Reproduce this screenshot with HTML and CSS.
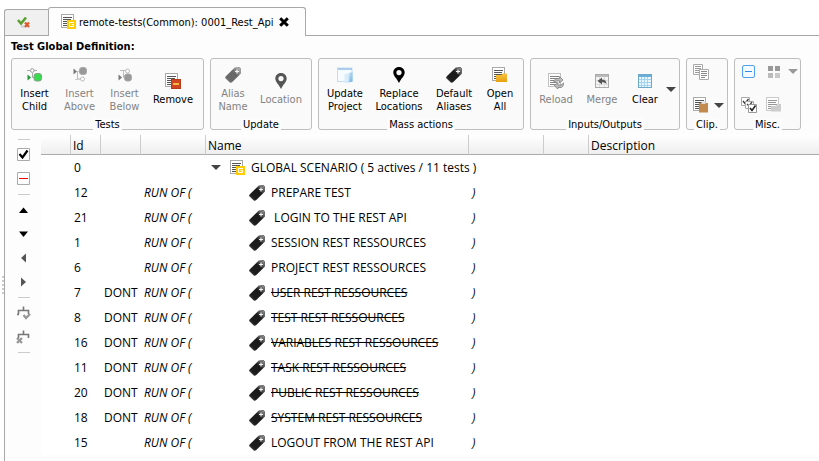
FILE: index.html
```html
<!DOCTYPE html>
<html lang="en">
<head>
<meta charset="utf-8">
<title>remote-tests(Common): 0001_Rest_Api</title>
<link rel="stylesheet" href="styles.css">
</head>
<body>
<svg class="sprite" aria-hidden="true">
  <defs>
    <linearGradient id="tagFill" x1="0" y1="1" x2="1" y2="0">
      <stop offset="0" stop-color="#666"/><stop offset=".25" stop-color="#1c1c1c"/><stop offset=".6" stop-color="#1a1a1a"/><stop offset="1" stop-color="#aaa"/>
    </linearGradient>
    <linearGradient id="folder" x1="0" y1="0" x2="0" y2="1">
      <stop offset="0" stop-color="#f8c544"/><stop offset="1" stop-color="#e8a00c"/>
    </linearGradient>
    <linearGradient id="blue" x1="0" y1="0" x2="1" y2="1">
      <stop offset="0" stop-color="#d5ecfa"/><stop offset="1" stop-color="#6aaee0"/>
    </linearGradient>
  </defs>
  <symbol id="page" viewBox="0 0 16 16">
    <rect x=".5" y=".5" width="12" height="13" fill="#fff" stroke="#aaa"/>
    <path d="M2 3.500h9M2 5.500h8M2 7.500h9M2 9.500h7M2 11.500h8" stroke="#555"/>
  </symbol>
  <symbol id="global" viewBox="0 0 16 16">
    <use href="#page" width="16" height="16"/>
    <rect x="6" y="6" width="9" height="9" fill="#fc0"/>
    <path d="M13 8.500H8.500v4H12.500v-2H10.500" fill="none" stroke="#fff"/>
  </symbol>
  <symbol id="tag" viewBox="0 0 16 16">
    <path d="M9.500 .7L14.500 0 16 1.500V6.500L7 15.300Q5.700 16.300 4.500 15.200L.6 11.500Q-.3 10.500.6 9.500z" fill="url(#tagFill)"/>
    <path d="M9.500 1.200L14.500 .5 15.500 1.500V6" fill="none" stroke="#666" stroke-width=".8"/>
    <path d="M12 2.500v4M10 4.500h4" stroke="#f4f4f4" stroke-width="1.200"/>
  </symbol>
  <symbol id="pin" viewBox="0 0 16 16">
    <path fill-rule="evenodd" d="M8 0C4.500 0 2.300 2.500 2.300 5.500 2.300 9 6 11.500 8 16 10 11.500 13.700 9 13.700 5.500 13.700 2.500 11.500 0 8 0zM8 3a2.600 2.600 0 1 1 0 5.200A2.600 2.600 0 0 1 8 3z" fill="currentColor"/>
  </symbol>
  <symbol id="child" viewBox="0 0 16 16">
    <path d="M1 3.500h3M8 3.500h3M6.500 6v4.500h2" fill="none" stroke="#aaa"/>
    <circle cx="6.300" cy="3.500" r="1.800" fill="#fff" stroke="#999"/>
    <path d="M1.500 7.500L5 10.500 1.500 13.500z" fill="#1d9b32"/>
    <rect x="8" y="6.500" width="7.500" height="7.500" rx="2.500" fill="#35dc4b" stroke="#8a9a8a"/>
  </symbol>
  <symbol id="above" viewBox="0 0 16 16">
    <path d="M1.500 1.500L5 4.500 1.500 7.500z" fill="#777"/>
    <path d="M7 4.500h-1.500v7.500h3" fill="none" stroke="#bbb"/>
    <rect x="7.500" y=".5" width="7" height="7" rx="2.500" fill="#999" stroke="#aaa"/>
    <circle cx="10.500" cy="12" r="2" fill="#fff" stroke="#bbb"/><path d="M3 12.500h5" stroke="#ccc"/>
  </symbol>
  <symbol id="below" viewBox="0 0 16 16">
    <path d="M3 3.500h6M6.500 4v6.500h2" fill="none" stroke="#bbb"/>
    <circle cx="10.500" cy="4" r="2" fill="#fff" stroke="#bbb"/>
    <path d="M1.500 7.500L5 10.500 1.500 13.500z" fill="#777"/>
    <rect x="7.500" y="7" width="7" height="7" rx="2.500" fill="#999" stroke="#aaa"/>
  </symbol>
  <symbol id="remove" viewBox="0 0 16 16">
    <use href="#page" width="16" height="16"/>
    <rect x="6.500" y="6.500" width="9" height="9" fill="#cf4520" stroke="#b93a1c"/>
    <path d="M8 11h6" stroke="#ffe14a" stroke-width="1.500"/>
  </symbol>
  <symbol id="project" viewBox="0 0 16 16">
    <rect x=".5" y="1" width="14.500" height="13.500" fill="#f6fbff" stroke="#c3dcf2"/>
    <path d="M1 2h14" stroke="#9cc4e6" stroke-width="1.600"/>
    <path d="M7.500 7.500l4-1.500v10h-4z" fill="#d8ecfb"/><path d="M11.500 6l4-1v9.500l-4 1z" fill="url(#blue)"/>
  </symbol>
  <symbol id="open" viewBox="0 0 16 16">
    <use href="#page" width="16" height="16"/>
    <path d="M4 8h5.500l1-1.500H15V15H4z" fill="url(#folder)"/>
  </symbol>
  <symbol id="reload" viewBox="0 0 16 16">
    <use href="#page" width="16" height="16" opacity=".7"/>
    <path d="M6 9.500V7.500l2-2h3.500V3.500L15 7l-3.500 3V8H8zM15.500 10v2l-2 2.500H10v2L6.500 12.500 10 9.500v2.500h3z" fill="#bbb" stroke="#777" stroke-width=".7"/>
  </symbol>
  <symbol id="merge" viewBox="0 0 16 16">
    <rect x="1.500" y="1.500" width="13" height="13" fill="#f4f4f4" stroke="#aaa"/>
    <path d="M2 3h12" stroke="#bbb" stroke-width="2"/><path d="M2 7.500h12M2 11.500h12M5.500 4v10M10.500 4v10" stroke="#ddd"/>
    <path d="M3.500 8L8 4.500V6.500Q12.500 6.500 12.500 11 11 9 8 9.300V11.500z" fill="#555"/>
  </symbol>
  <symbol id="clear" viewBox="0 0 16 16">
    <rect x="1.500" y="1.500" width="13" height="13" fill="#e8f7ff" stroke="#6ea9c9"/>
    <path d="M2 3h12" stroke="#6aaedb" stroke-width="2"/><path d="M2 6.500h12M2 9.500h12M2 12.500h12M4.500 4v10M7.500 4v10M10.500 4v10" stroke="#a5d3ee"/>
  </symbol>
  <symbol id="copy" viewBox="0 0 16 16">
    <path d="M.5 .5h9v10h-9z" fill="#fff" stroke="#aaa"/><path d="M2 2.500h6M2 4.500h6M2 6.500h6M2 8.500h6" stroke="#999"/>
    <path d="M6.500 5.500h9v10h-9z" fill="#fff" stroke="#aaa"/><path d="M8 7.500h6M8 9.500h6M8 11.500h6M8 13.500h4" stroke="#888"/>
  </symbol>
  <symbol id="paste" viewBox="0 0 16 16">
    <use href="#page" width="16" height="16"/>
    <path d="M6 6h9v9.500H6z" fill="#c28a4c"/><path d="M8.500 4.500h4v2.500h-4z" fill="#ddd"/>
  </symbol>
  <symbol id="collapse" viewBox="0 0 16 16">
    <rect x="1.500" y="1.500" width="12" height="12" rx="1.500" fill="#f5faff" stroke="#4da0ef"/><path d="M4 7.500h7" stroke="#2f8fe8"/>
  </symbol>
  <symbol id="tiles" viewBox="0 0 16 16">
    <path d="M2 2h5v5H2zM9 2h5v5H9z" fill="#999"/><path d="M2 9h5v5H2z" fill="#bbb"/><path d="M9 9h5v5H9z" fill="#c8c8c8"/>
  </symbol>
  <symbol id="checks" viewBox="0 0 16 16">
    <path d="M.5 .5h8v8h-8z" fill="#fff" stroke="#aaa"/><path d="M2 4l2 2.500L7.500 2" fill="none" stroke="#333" stroke-width="1.300"/>
    <path d="M4.500 4.500h8v7h-8z" fill="#fff" stroke="#aaa"/><path d="M6 7l2 2L11 5" fill="none" stroke="#444" stroke-width="1.300"/>
    <path d="M7.500 7.500h8v8h-8z" fill="#fff" stroke="#999"/><path d="M9 11l2 2.500L14.500 8.500" fill="none" stroke="#222" stroke-width="1.600"/>
  </symbol>
  <symbol id="pagefolder" viewBox="0 0 16 16">
    <use href="#page" width="16" height="16" opacity=".6"/>
    <path d="M5 9h5l2-2h3v7.500H5z" fill="#ccc"/>
  </symbol>
  <symbol id="tree" viewBox="0 0 16 16">
    <path d="M7.500 1.500v4M2.500 9V5.500H12.500V9M1 9.500h2" fill="none" stroke="#777" stroke-width="1.600"/>
  </symbol>
</svg>

<nav class="tabs">
  <a class="tab" href="#" aria-label="Results">
    <svg class="icon" viewBox="0 0 16 16"><path d="M5 11.500h5" stroke="#ccc" stroke-width="2"/><path d="M2 5L5 8.500 10 2.500" fill="none" stroke="#5aa02c" stroke-width="2.600"/><path d="M9 7.500l4 4.500M13 7.500l-4 4.500" stroke="#e0592a" stroke-width="2.200"/></svg>
  </a>
  <div class="tab active">
    <svg class="icon" viewBox="0 0 16 16"><use href="#global"/></svg>
    <span>remote-tests(Common): 0001_Rest_Api</span>
    <button class="close" aria-label="Close"><svg viewBox="0 0 10 10"><path d="M1.200 1.200l7.600 7.600M8.800 1.200l-7.600 7.600" stroke="#000" stroke-width="3"/></svg></button>
  </div>
  <div class="filler"></div>
</nav>

<div class="frame">
  <div class="sash"></div>
  <main class="panel">
    <h1>Test Global Definition:</h1>
    <div class="ribbon">
      <section class="group">
        <div class="tools tests">
          <button><svg class="icon"><use href="#child"/></svg>Insert<br>Child</button>
          <button disabled><svg class="icon"><use href="#above"/></svg>Insert<br>Above</button>
          <button disabled><svg class="icon"><use href="#below"/></svg>Insert<br>Below</button>
          <button><svg class="icon"><use href="#remove"/></svg>Remove</button>
        </div>
        <h2>Tests</h2>
      </section>
      <section class="group">
        <div class="tools update">
          <button disabled><svg class="icon faded"><use href="#tag"/></svg>Alias<br>Name</button>
          <button disabled><svg class="icon pin"><use href="#pin"/></svg>Location</button>
        </div>
        <h2>Update</h2>
      </section>
      <section class="group">
        <div class="tools mass">
          <button><svg class="icon"><use href="#project"/></svg>Update<br>Project</button>
          <button><svg class="icon"><use href="#pin"/></svg>Replace<br>Locations</button>
          <button><svg class="icon"><use href="#tag"/></svg>Default<br>Aliases</button>
          <button><svg class="icon"><use href="#open"/></svg>Open<br>All</button>
        </div>
        <h2>Mass actions</h2>
      </section>
      <section class="group">
        <div class="tools io">
          <button disabled><svg class="icon"><use href="#reload"/></svg>Reload</button>
          <button disabled><svg class="icon"><use href="#merge"/></svg>Merge</button>
          <button><svg class="icon"><use href="#clear"/></svg>Clear</button>
          <button aria-label="Clear options"><span class="caret"></span></button>
        </div>
        <h2>Inputs/Outputs</h2>
      </section>
      <section class="group">
        <div class="tools clip">
          <button aria-label="Copy" disabled><svg class="icon"><use href="#copy"/></svg></button><span></span>
          <button aria-label="Paste"><svg class="icon"><use href="#paste"/></svg></button>
          <button aria-label="Paste options"><span class="caret"></span></button>
        </div>
        <h2>Clip.</h2>
      </section>
      <section class="group">
        <div class="tools misc">
          <button aria-label="Collapse"><svg class="icon"><use href="#collapse"/></svg></button>
          <button aria-label="Tiles" disabled><svg class="icon"><use href="#tiles"/></svg></button>
          <button aria-label="Tile options" disabled><span class="caret"></span></button>
          <button aria-label="Check all"><svg class="icon"><use href="#checks"/></svg></button>
          <button aria-label="Open file" disabled><svg class="icon"><use href="#pagefolder"/></svg></button>
        </div>
        <h2>Misc.</h2>
      </section>
    </div>

    <div class="content">
      <div class="sidebar">
        <hr>
        <button aria-label="Enable"><svg class="icon" viewBox="0 0 16 16"><path d="M1.500 1.500h12v12h-12z" fill="#fff" stroke="#aaa"/><path d="M3.500 7l3 3.500L11.500 3.500" fill="none" stroke="#000" stroke-width="2.200"/></svg></button>
        <button aria-label="Disable"><svg class="icon" viewBox="0 0 16 16"><path d="M1.500 1.500h12v12h-12z" fill="#fff" stroke="#aaa"/><path d="M3 7h9v1H3z" fill="#f00"/></svg></button>
        <hr>
        <button aria-label="Move up"><svg class="icon" viewBox="0 0 16 16"><path d="M3 11L7.500 5.500 12 11z"/></svg></button>
        <button aria-label="Move down"><svg class="icon" viewBox="0 0 16 16"><path d="M3 5.500L7.500 11 12 5.500z"/></svg></button>
        <button aria-label="Move left"><svg class="icon" viewBox="0 0 16 16"><path d="M10 3.500L5 8 10 12.500z" fill="#555"/></svg></button>
        <button aria-label="Move right"><svg class="icon" viewBox="0 0 16 16"><path d="M5 3.500L10 8 5 12.500z" fill="#555"/></svg></button>
        <hr>
        <button aria-label="Check tree"><svg class="icon" viewBox="0 0 16 16"><use href="#tree"/><path d="M7.500 10l2.500 3 4-4" fill="none" stroke="#999" stroke-width="2.400"/></svg></button>
        <button aria-label="Uncheck tree"><svg class="icon" viewBox="0 0 16 16"><use href="#tree"/><path d="M.5 9h6v5.500h-6z" fill="#fdfdfd"/><path d="M1 9l5 5M6 9l-5 5" stroke="#999" stroke-width="2.400"/></svg></button>
        <hr>
      </div>
      <table class="scenario">
        <colgroup><col class="c-gutter"><col class="c-id"><col class="c-flag"><col class="c-run"><col class="c-name"><col class="c-end"><col class="c-extra"><col></colgroup>
        <thead><tr><th></th><th>Id</th><th></th><th></th><th>Name</th><th></th><th></th><th>Description</th></tr></thead>
        <tbody>
          <tr><td></td><td>0</td><td></td><td></td><td><div class="root"><span class="caret"></span><svg class="icon"><use href="#global"/></svg>GLOBAL SCENARIO ( 5 actives / 11 tests )</div></td><td></td><td></td><td></td></tr>
          <tr><td></td><td>12</td><td></td><td><i>RUN OF (</i></td><td><div class="leaf"><svg class="icon"><use href="#tag"/></svg><span>PREPARE TEST</span></div></td><td><i>)</i></td><td></td><td></td></tr>
          <tr><td></td><td>21</td><td></td><td><i>RUN OF (</i></td><td><div class="leaf"><svg class="icon"><use href="#tag"/></svg><span>&nbsp;LOGIN TO THE REST API</span></div></td><td><i>)</i></td><td></td><td></td></tr>
          <tr><td></td><td>1</td><td></td><td><i>RUN OF (</i></td><td><div class="leaf"><svg class="icon"><use href="#tag"/></svg><span>SESSION REST RESSOURCES</span></div></td><td><i>)</i></td><td></td><td></td></tr>
          <tr><td></td><td>6</td><td></td><td><i>RUN OF (</i></td><td><div class="leaf"><svg class="icon"><use href="#tag"/></svg><span>PROJECT REST RESSOURCES</span></div></td><td><i>)</i></td><td></td><td></td></tr>
          <tr><td></td><td>7</td><td>DONT</td><td><i>RUN OF (</i></td><td><div class="leaf"><svg class="icon"><use href="#tag"/></svg><s>USER REST RESSOURCES</s></div></td><td><i>)</i></td><td></td><td></td></tr>
          <tr><td></td><td>8</td><td>DONT</td><td><i>RUN OF (</i></td><td><div class="leaf"><svg class="icon"><use href="#tag"/></svg><s>TEST REST RESSOURCES</s></div></td><td><i>)</i></td><td></td><td></td></tr>
          <tr><td></td><td>16</td><td>DONT</td><td><i>RUN OF (</i></td><td><div class="leaf"><svg class="icon"><use href="#tag"/></svg><s>VARIABLES REST RESSOURCES</s></div></td><td><i>)</i></td><td></td><td></td></tr>
          <tr><td></td><td>11</td><td>DONT</td><td><i>RUN OF (</i></td><td><div class="leaf"><svg class="icon"><use href="#tag"/></svg><s>TASK REST RESSOURCES</s></div></td><td><i>)</i></td><td></td><td></td></tr>
          <tr><td></td><td>20</td><td>DONT</td><td><i>RUN OF (</i></td><td><div class="leaf"><svg class="icon"><use href="#tag"/></svg><s>PUBLIC REST RESSOURCES</s></div></td><td><i>)</i></td><td></td><td></td></tr>
          <tr><td></td><td>18</td><td>DONT</td><td><i>RUN OF (</i></td><td><div class="leaf"><svg class="icon"><use href="#tag"/></svg><s>SYSTEM REST RESSOURCES</s></div></td><td><i>)</i></td><td></td><td></td></tr>
          <tr><td></td><td>15</td><td></td><td><i>RUN OF (</i></td><td><div class="leaf"><svg class="icon"><use href="#tag"/></svg><span>LOGOUT FROM THE REST API</span></div></td><td><i>)</i></td><td></td><td></td></tr>
        </tbody>
      </table>
    </div>
  </main>
</div>
</body>
</html>
```
FILE: styles.css
```css
* { box-sizing: border-box; }
body {
  margin: 0;
  min-height: 100vh;
  display: flex;
  flex-direction: column;
  background: #fff;
  color: #000;
  font: 11px/13px "DejaVu Sans Condensed", "DejaVu Sans", sans-serif;
}
button {
  margin: 0;
  padding: 0;
  border: 0;
  background: none;
  color: inherit;
  font: inherit;
}
button:disabled { color: #838383; }
h1, h2 { margin: 0; font-size: 11px; }
.sprite { position: absolute; width: 0; height: 0; }
.icon { display: block; flex: none; width: 16px; height: 16px; }

/* Tabs */
.tabs { display: flex; align-items: flex-end; height: 36px; padding-left: 4px; }
.tab {
  display: flex;
  align-items: center;
  justify-content: center;
  width: 44px;
  height: 27px;
  padding-right: 6px;
  border: 1px solid #a8a8a8;
  border-right: 0;
  border-radius: 3px 0 0 0;
  background: #f0f0f0;
}
.tab.active {
  width: auto;
  height: 29px;
  padding: 0 16px 0 12px;
  gap: 2px;
  border: 1px solid #a8a8a8;
  border-bottom: 0;
  border-radius: 3px 3px 0 0;
  background: #fdfdfd;
}
.close { width: 10px; height: 10px; margin-left: 4px; }
.close svg { display: block; width: 10px; height: 10px; }
.filler { flex: 1; border-bottom: 1px solid #a8a8a8; }

/* Main panel */
.frame { flex: 1; display: flex; }
.sash {
  flex: none;
  align-self: center;
  width: 4px;
  height: 18px;
  margin-top: 72px;
  border-right: 2px dotted #ccc;
}
.panel {
  flex: 1;
  min-width: 0;
  display: flex;
  flex-direction: column;
  border-left: 1px solid #a8a8a8;
  background: #fdfdfd;
}
h1 { padding: 4px 6px 5px; }

/* Ribbon */
.ribbon { display: flex; gap: 6px; padding: 0 6px; }
.group {
  display: flex;
  flex-direction: column;
  height: 72px;
  border: 1px solid #bebebe;
  border-radius: 3px;
  background: #fafafa;
}
.group h2 {
  align-self: center;
  margin-bottom: -2px;
  padding: 0 2px;
  background: #fcfcfc;
  font-weight: normal;
}
.tools { flex: 1; display: grid; align-items: center; padding: 2px 2px 0; }
.tools button { display: flex; flex-direction: column; align-items: center; justify-self: center; text-align: center; }
.tools .icon { margin-bottom: 4px; }
.tests { grid-template-columns: 45px 45px 45px 52px; padding: 2px 4px 0 0; }
.update { grid-template-columns: 42px 54px; padding: 2px 3px 0 1px; }
.mass { grid-template-columns: 48px 60px 50px 42px; }
.io { grid-template-columns: 46px 46px 40px 12px; }
.clip { grid-template-columns: 24px 12px; }
.misc { grid-template-columns: 24px 26px 11px; }
.clip, .misc { row-gap: 8px; padding: 0 2px; }
.clip .icon, .misc .icon { margin: 0; }
.faded { opacity: .65; }
.pin { color: #555; }
.caret {
  display: block;
  flex: none;
  border: 5px solid transparent;
  border-top-color: #444;
  border-bottom: 0;
}
:disabled .caret { border-top-color: #999; }

/* Side toolbar and table */
.content { flex: 1; display: flex; align-items: stretch; padding-top: 5px; }
.sidebar { flex: none; width: 36px; padding: 1px 0 0 2px; display: flex; flex-direction: column; align-items: center; }
.sidebar hr {
  flex: none;
  width: 12px;
  height: 1px;
  margin: 3px 0;
  border: 0;
  background: #ccc;
}
.sidebar button { height: 24px; padding: 4px 0; }
.scenario {
  flex: 1;
  align-self: flex-start;
  width: 100%;
  table-layout: fixed;
  border-collapse: separate;
  border-spacing: 0;
  background: #fff;
  font: 12px/16px "Open Sans", sans-serif;
}
.c-gutter, .c-id { width: 30px; }
.c-flag { width: 40px; }
.c-run { width: 65px; }
.c-name { width: 263px; }
.c-end { width: 75px; }
.c-extra { width: 45px; }
th {
  height: 20px;
  padding: 2px 2px 0;
  border-right: 1px solid #ccc;
  border-bottom: 1px solid #aaa;
  background: linear-gradient(#fff, #eee);
  font-weight: normal;
  text-align: left;
}
th:last-child { border-right: 0; }
td { height: 25px; padding: 0 3px; white-space: nowrap; }
.root { display: flex; align-items: center; gap: 5px; padding-left: 2px; }
.root .caret { margin-right: 4px; }
.leaf { display: flex; align-items: center; gap: 6px; padding-left: 40px; }
```
